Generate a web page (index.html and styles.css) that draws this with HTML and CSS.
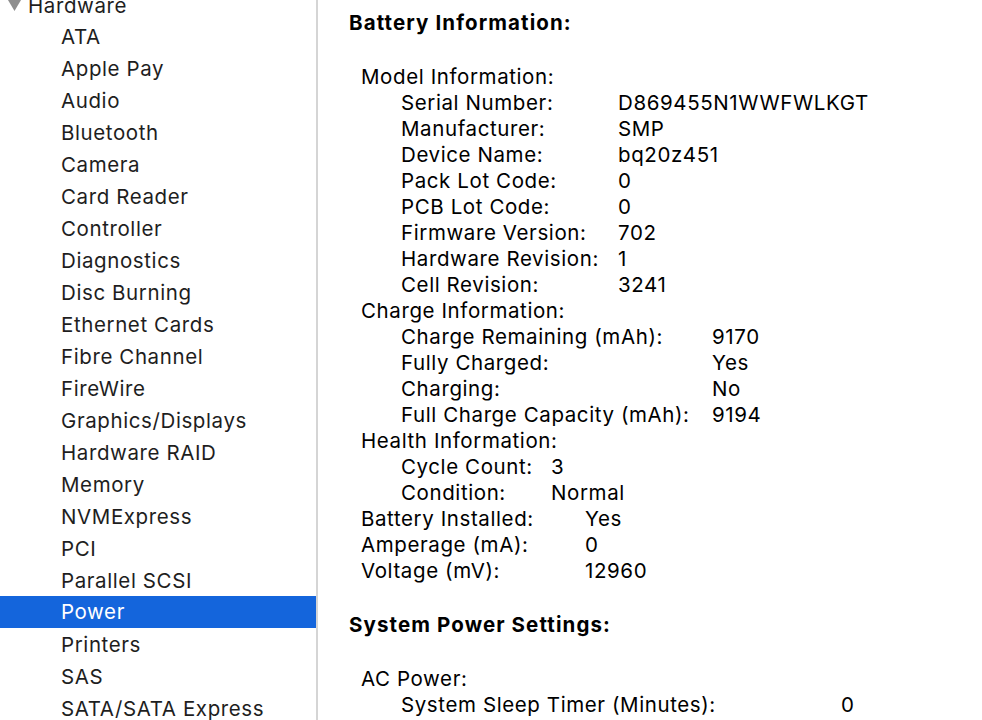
FILE: index.html
```html
<!DOCTYPE html>
<html lang="en">
  <head>
    <meta charset="UTF-8" />
    <meta name="viewport" content="width=device-width, initial-scale=1.0" />
    <title>System Information - Power</title>
    <link rel="stylesheet" href="styles.css">
  </head>
  <body>
    <div class="window">
      <div class="sidebar">
        <div class="category">
          <svg class="disclosure" width="13" height="11" viewBox="0 0 13 11"><path d="M0 0 L13 0 L6.5 11 Z" fill="#8e8e8e"/></svg>
          <span>Hardware</span>
        </div>
        <ul class="items">
          <li>ATA</li>
          <li>Apple Pay</li>
          <li>Audio</li>
          <li>Bluetooth</li>
          <li>Camera</li>
          <li>Card Reader</li>
          <li>Controller</li>
          <li>Diagnostics</li>
          <li>Disc Burning</li>
          <li>Ethernet Cards</li>
          <li>Fibre Channel</li>
          <li>FireWire</li>
          <li>Graphics/Displays</li>
          <li>Hardware RAID</li>
          <li>Memory</li>
          <li>NVMExpress</li>
          <li>PCI</li>
          <li>Parallel SCSI</li>
          <li class="selected">Power</li>
          <li>Printers</li>
          <li>SAS</li>
          <li>SATA/SATA Express</li>
        </ul>
      </div>

      <div class="details">
        <h2>Battery Information:</h2>
        <div class="group">
          <div class="group-title">Model Information:</div>
          <div class="rows model">
            <span>Serial Number:</span><span>D869455N1WWFWLKGT</span>
            <span>Manufacturer:</span><span>SMP</span>
            <span>Device Name:</span><span>bq20z451</span>
            <span>Pack Lot Code:</span><span>0</span>
            <span>PCB Lot Code:</span><span>0</span>
            <span>Firmware Version:</span><span>702</span>
            <span>Hardware Revision:</span><span>1</span>
            <span>Cell Revision:</span><span>3241</span>
          </div>
        </div>
        <div class="group">
          <div class="group-title">Charge Information:</div>
          <div class="rows charge">
            <span>Charge Remaining (mAh):</span><span>9170</span>
            <span>Fully Charged:</span><span>Yes</span>
            <span>Charging:</span><span>No</span>
            <span>Full Charge Capacity (mAh):</span><span>9194</span>
          </div>
        </div>
        <div class="group">
          <div class="group-title">Health Information:</div>
          <div class="rows health">
            <span>Cycle Count:</span><span>3</span>
            <span>Condition:</span><span>Normal</span>
          </div>
        </div>
        <div class="rows top">
          <span>Battery Installed:</span><span>Yes</span>
          <span>Amperage (mA):</span><span>0</span>
          <span>Voltage (mV):</span><span>12960</span>
        </div>

        <h2>System Power Settings:</h2>
        <div class="group">
          <div class="group-title">AC Power:</div>
          <div class="rows ac">
            <span>System Sleep Timer (Minutes):</span><span>0</span>
          </div>
        </div>
      </div>
    </div>
  </body>
</html>
```

FILE: styles.css
```css
* {
  padding: 0;
  margin: 0;
  box-sizing: border-box;
}

body {
  width: 982px;
  height: 720px;
  overflow: hidden;
  background-color: #fff;
  font-family: Inter, "Liberation Sans", sans-serif;
  font-size: 20.5px;
  letter-spacing: 0.6px;
}

.window {
  display: flex;
  height: 100%;
}

/* sidebar ----------------------------------------------------- */
.sidebar {
  width: 318px;
  flex-shrink: 0;
  border-right: 2px solid #d5d5d5;
  color: #1e1e1e;
  margin-top: -11px;
}

.category {
  height: 32px;
  display: flex;
  align-items: center;
  gap: 7px;
  padding-left: 8px;
}

.items {
  list-style: none;
}

.items li {
  height: 32px;
  line-height: 32px;
  padding-left: 61px;
}

.items .selected {
  background-color: #1465dc;
  color: #fff;
  margin-top: -1px;
  margin-bottom: 1px;
}

/* details ----------------------------------------------------- */
.details {
  flex: 1;
  padding: 10px 0 0 31px;
  color: #000;
  line-height: 26px;
}

h2 {
  font-size: 20.5px;
  font-weight: 700;
  letter-spacing: 1.1px;
  margin-bottom: 28px;
}

.group-title,
.rows.top {
  padding-left: 12px;
}

.rows {
  display: grid;
  padding-left: 52px;
}

.rows.top {
  grid-template-columns: 224px auto;
  margin-bottom: 28px;
}

.model {
  grid-template-columns: 217px auto;
}

.charge {
  grid-template-columns: 311px auto;
}

.health {
  grid-template-columns: 150px auto;
}

.ac {
  grid-template-columns: 440px auto;
}
```
